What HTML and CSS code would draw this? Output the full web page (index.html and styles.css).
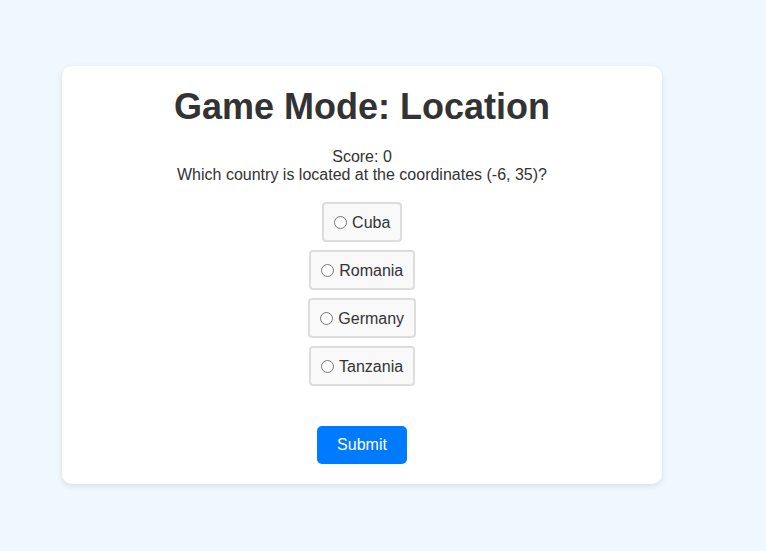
FILE: index.html
```html
<!DOCTYPE html>
<html>
<head>
<meta charset="utf-8">
<link rel="stylesheet" href="styles.css">
</head>
<body>
<div class="card">
  <h1 class="title">Game Mode: Location</h1>
  <div class="question">
    <div>Score: 0</div>
    <div>Which country is located at the coordinates (-6, 35)?</div>
  </div>
  <div class="options">
    <label class="option"><input type="radio" name="c"> Cuba</label>
    <label class="option"><input type="radio" name="c"> Romania</label>
    <label class="option"><input type="radio" name="c"> Germany</label>
    <label class="option"><input type="radio" name="c"> Tanzania</label>
  </div>
  <button class="submit">Submit</button>
</div>
</body>
</html>
```
FILE: styles.css
```css
html, body {
  margin: 0;
  background: #f0f8ff;
}
body {
  padding: 66px 62px;
  font-family: "Liberation Sans", Arial, sans-serif;
  color: #333;
}
.card {
  width: 600px;
  box-sizing: border-box;
  background: #fff;
  border-radius: 10px;
  box-shadow: 0 2px 6px rgba(0, 0, 0, 0.1);
  padding: 20px;
  display: flex;
  flex-direction: column;
  align-items: center;
}
.title {
  margin: 0 0 21px;
  font-size: 36px;
  font-weight: bold;
  line-height: 41px;
}
.question {
  font-size: 16px;
  line-height: 18px;
  text-align: center;
}
.options {
  margin-top: 18px;
  display: flex;
  flex-direction: column;
  align-items: center;
  gap: 8px;
}
.option {
  display: block;
  height: 40px;
  box-sizing: border-box;
  padding: 10px 10px 0;
  border: 2px solid #ddd;
  border-radius: 4px;
  background: #f9f9f9;
  font-size: 16px;
  line-height: 18px;
}
.option input {
  margin: 0 1px 0 0;
  vertical-align: -1px;
}
.submit {
  margin-top: 40px;
  padding: 10px 20px;
  border: none;
  border-radius: 5px;
  background: #007bff;
  color: #fff;
  font-family: "Liberation Sans", Arial, sans-serif;
  font-size: 16px;
  line-height: 18px;
}
```
